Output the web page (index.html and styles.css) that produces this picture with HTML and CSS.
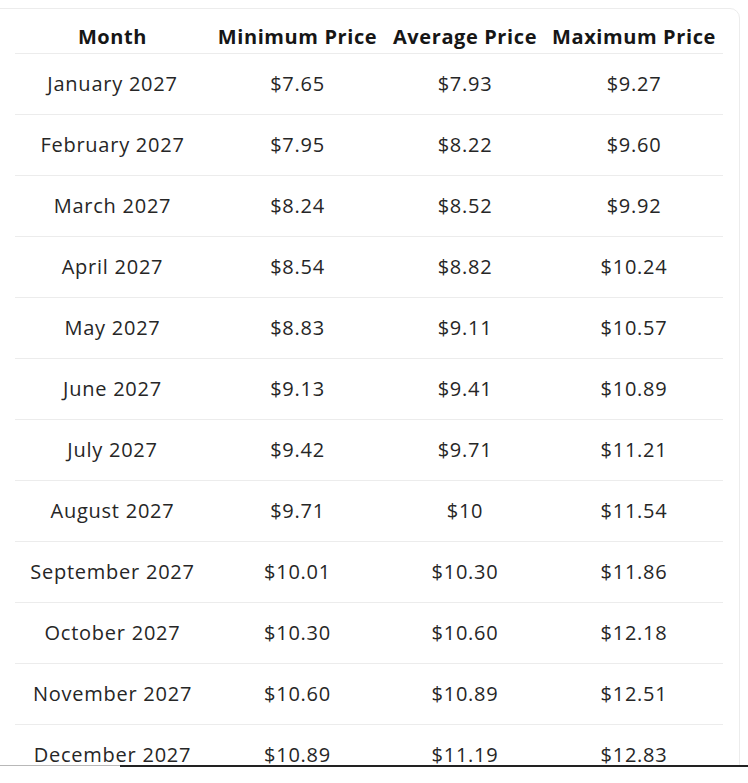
FILE: index.html
```html
<!DOCTYPE html>
<html>
<head>
<meta charset="utf-8">
<link rel="stylesheet" href="styles.css">
</head>
<body>
<div class="viewport">
  <div class="card">
    <table class="prices">
      <colgroup>
        <col class="c-month"><col class="c-min"><col class="c-avg"><col class="c-max">
      </colgroup>
      <thead>
        <tr><th>Month</th><th>Minimum Price</th><th>Average Price</th><th>Maximum Price</th></tr>
      </thead>
      <tbody>
        <tr><td>January 2027</td><td>$7.65</td><td>$7.93</td><td>$9.27</td></tr>
        <tr><td>February 2027</td><td>$7.95</td><td>$8.22</td><td>$9.60</td></tr>
        <tr><td>March 2027</td><td>$8.24</td><td>$8.52</td><td>$9.92</td></tr>
        <tr><td>April 2027</td><td>$8.54</td><td>$8.82</td><td>$10.24</td></tr>
        <tr><td>May 2027</td><td>$8.83</td><td>$9.11</td><td>$10.57</td></tr>
        <tr><td>June 2027</td><td>$9.13</td><td>$9.41</td><td>$10.89</td></tr>
        <tr><td>July 2027</td><td>$9.42</td><td>$9.71</td><td>$11.21</td></tr>
        <tr><td>August 2027</td><td>$9.71</td><td>$10</td><td>$11.54</td></tr>
        <tr><td>September 2027</td><td>$10.01</td><td>$10.30</td><td>$11.86</td></tr>
        <tr><td>October 2027</td><td>$10.30</td><td>$10.60</td><td>$12.18</td></tr>
        <tr><td>November 2027</td><td>$10.60</td><td>$10.89</td><td>$12.51</td></tr>
        <tr><td>December 2027</td><td>$10.89</td><td>$11.19</td><td>$12.83</td></tr>
      </tbody>
    </table>
  </div>
</div>
<div class="bottombar"><span class="seg-light"></span><span class="seg-dark"></span></div>
</body>
</html>
```
FILE: styles.css
```css
html, body {
  margin: 0;
  padding: 0;
  background: #fff;
}
body {
  font-family: "Open Sans", "Liberation Sans", sans-serif;
  color: #262626;
}
.viewport {
  height: 765px;
  overflow: hidden;
}
.card {
  margin: 8px 0 0 -12px;
  width: 752px;
  box-sizing: border-box;
  border: 1px solid #ececec;
  border-radius: 10px;
  padding: 12px 16px 20px 26px;
  background: #fff;
}
.prices {
  width: 708px;
  border-collapse: collapse;
  table-layout: fixed;
}
.c-month { width: 195px; }
.c-min { width: 175px; }
.c-avg { width: 160px; }
.c-max { width: 178px; }
.prices th {
  font-weight: 700;
  font-size: 20px;
  letter-spacing: 0.6px;
  color: #161616;
  text-align: center;
  height: 30px;
  padding: 0 0 2px;
  border-bottom: 1px solid #ececec;
  white-space: nowrap;
}
.prices td {
  font-size: 20px;
  letter-spacing: 0.75px;
  text-align: center;
  height: 58px;
  padding: 0 0 2px;
  border-bottom: 1px solid #ececec;
  white-space: nowrap;
}
.bottombar {
  display: flex;
  height: 2px;
}
.seg-light {
  width: 120px;
  height: 1px;
  background: #b8b8b8;
}
.seg-dark {
  flex: 1;
  background: #222;
}
```
